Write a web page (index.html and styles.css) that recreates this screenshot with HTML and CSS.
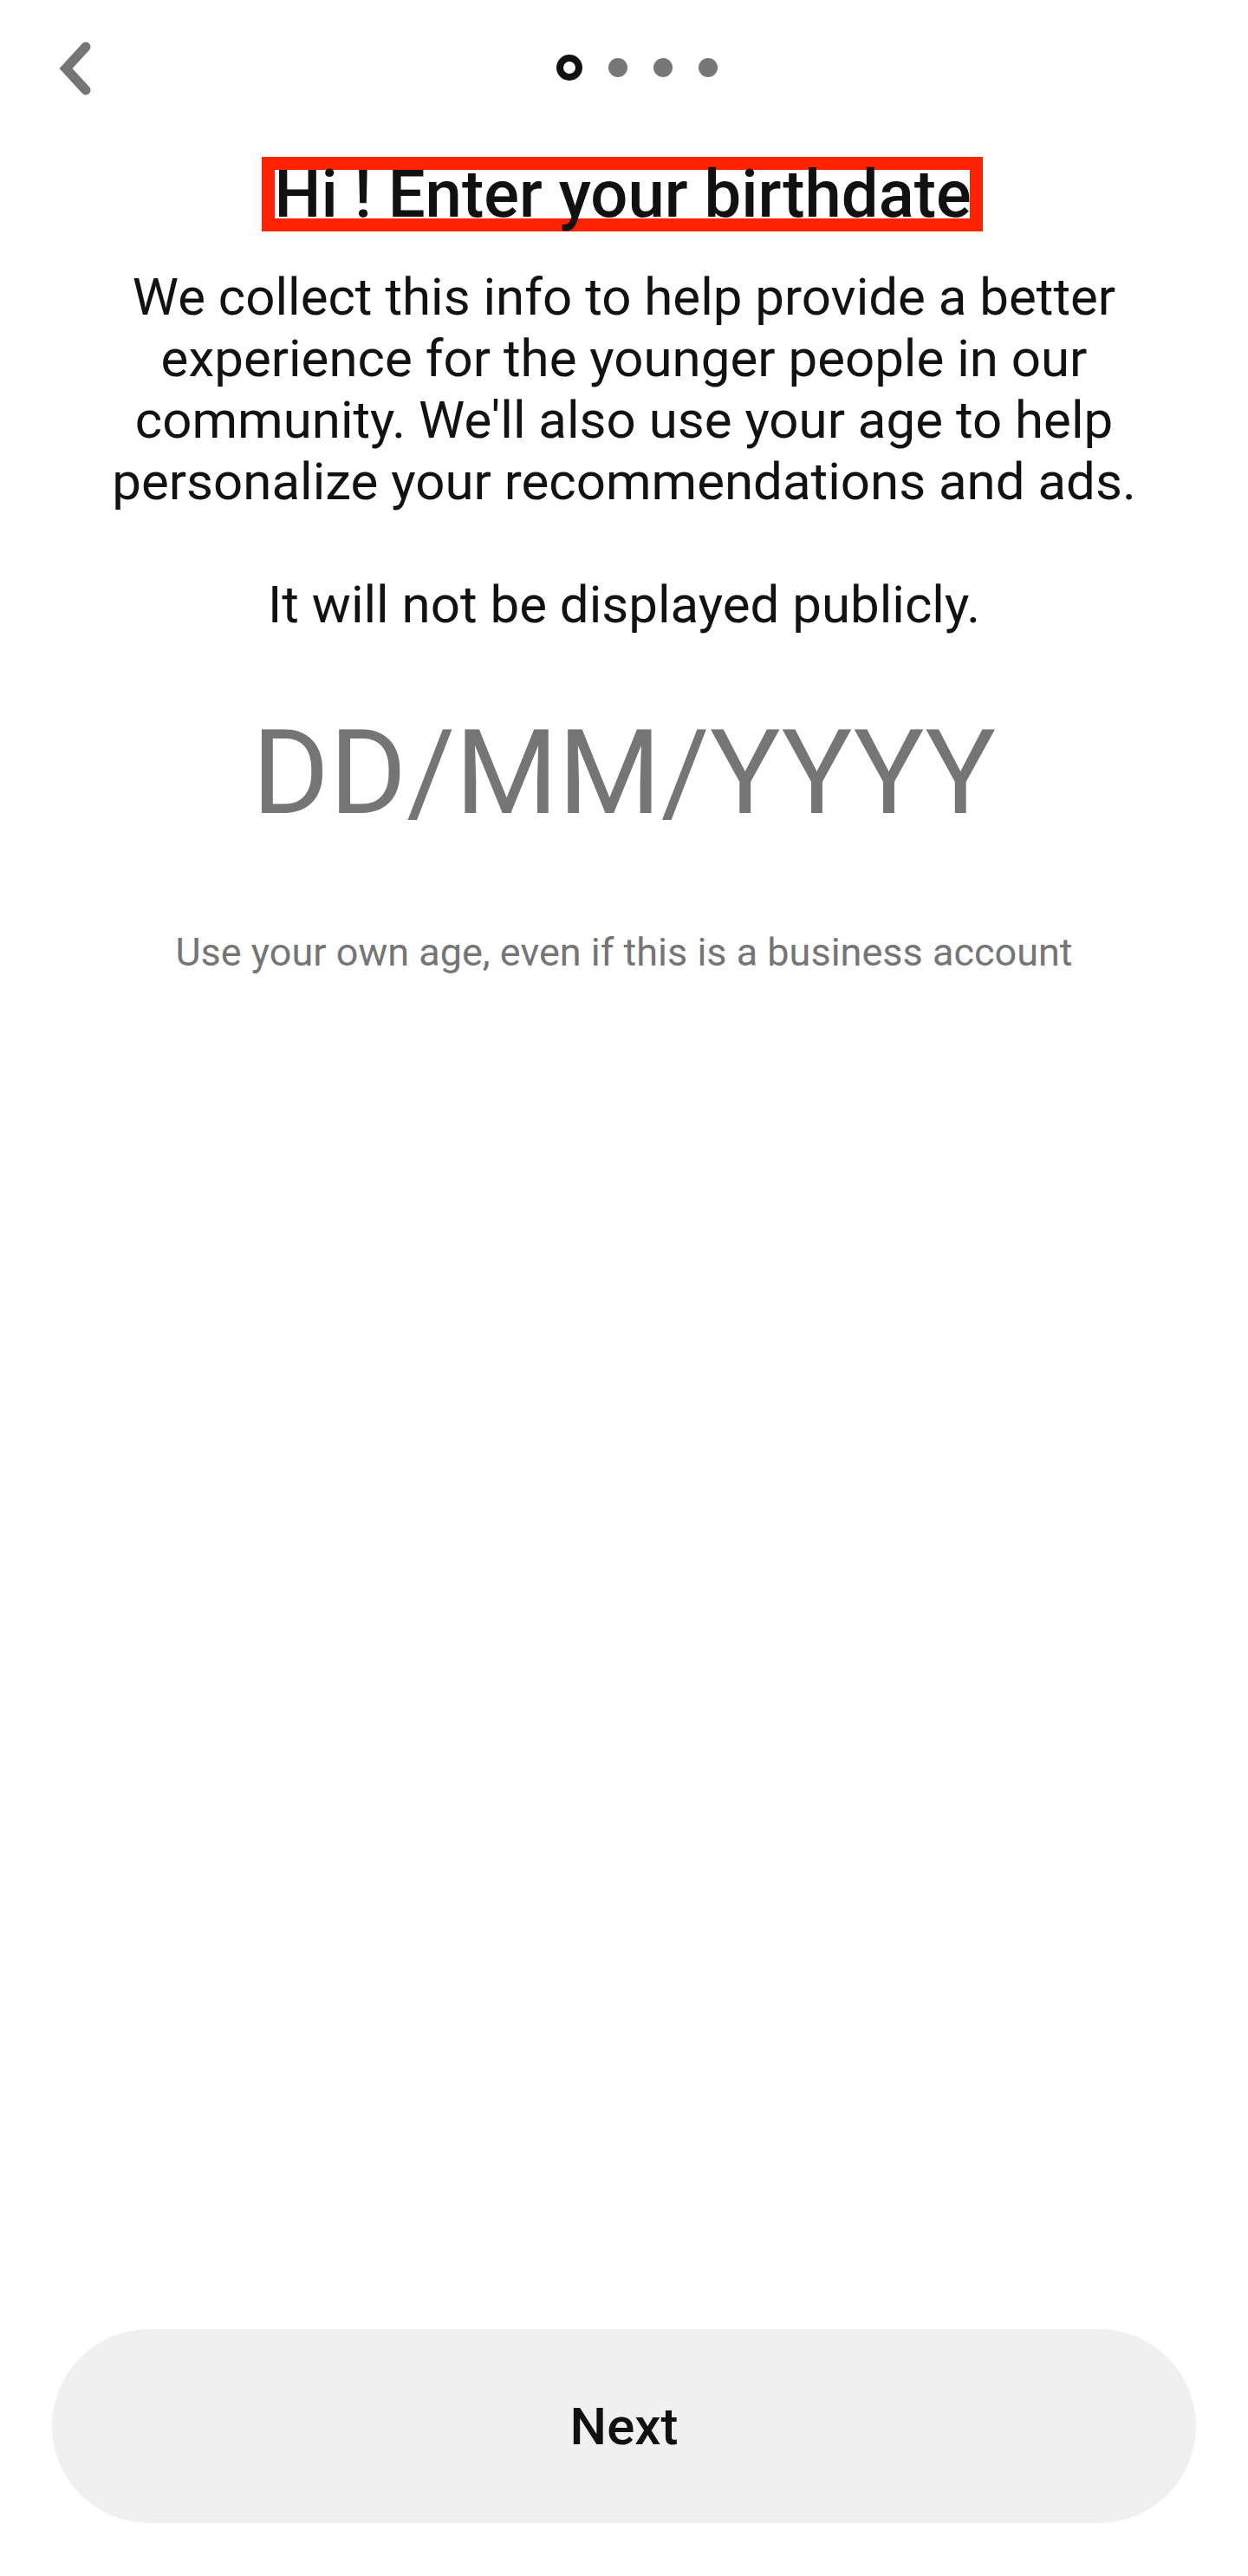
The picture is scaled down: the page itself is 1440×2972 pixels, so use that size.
FILE: index.html
```html
<!DOCTYPE html>
<html lang="en">
<head>
<meta charset="utf-8">
<title>Enter your birthdate</title>
<link rel="stylesheet" href="styles.css">
</head>
<body>
<div class="page">
  <header class="topbar">
    <button class="back" aria-label="Back">
      <svg width="60" height="80" viewBox="0 0 60 80" aria-hidden="true">
        <path d="M49 16 L26 41 L49 66" fill="none" stroke="#757575" stroke-width="11" stroke-linecap="round" stroke-linejoin="miter"/>
      </svg>
    </button>
    <div class="steps">
      <span class="step step-active"></span>
      <span class="step"></span>
      <span class="step"></span>
      <span class="step"></span>
    </div>
  </header>

  <div class="title-row">
    <h1 class="title">Hi ! Enter your birthdate</h1>
  </div>

  <div class="intro">
    <p>We collect this info to help provide a better experience for the younger people in our community. We'll also use your age to help personalize your recommendations and ads.</p>
    <p class="intro-gap">It will not be displayed publicly.</p>
  </div>

  <div class="date-field">DD/MM/YYYY</div>

  <p class="hint">Use your own age, even if this is a business account</p>

  <button class="next">Next</button>
</div>
</body>
</html>
```

FILE: styles.css
```css
* {
  box-sizing: border-box;
}

html, body {
  margin: 0;
  padding: 0;
  background: #ffffff;
}

body {
  font-family: Roboto, "Noto Sans", "Liberation Sans", sans-serif;
  color: #121212;
}

.page {
  min-height: 2972px;
  display: flex;
  flex-direction: column;
  align-items: stretch;
}

.topbar {
  height: 156px;
  display: flex;
  align-items: center;
  padding-left: 50px;
}

.back {
  border: 0;
  padding: 0;
  margin: 0;
  background: transparent;
  width: 60px;
  height: 80px;
  display: block;
}

.back svg {
  display: block;
}

.steps {
  display: flex;
  align-items: center;
  gap: 30px;
  margin-left: 532px;
}

.step {
  width: 22px;
  height: 22px;
  border-radius: 50%;
  background: #777777;
}

.step-active {
  width: 30px;
  height: 30px;
  background: #ffffff;
  border: 8px solid #111111;
}

.title-row {
  display: flex;
  justify-content: center;
  margin-top: 25px;
  padding-right: 5px;
}

.title {
  margin: 0;
  width: 832px;
  height: 86px;
  border: 15px solid #ff2200;
  font-size: 76px;
  font-weight: 500;
  line-height: 56px;
  text-align: center;
  white-space: nowrap;
  color: #111111;
}

.intro {
  margin: 40px 60px 0;
  text-align: center;
  font-size: 60px;
  line-height: 71px;
  color: #121212;
}

.intro p {
  margin: 0;
}

.intro .intro-gap {
  margin-top: 71px;
}

.date-field {
  margin-top: 79px;
  text-align: center;
  font-size: 136px;
  line-height: normal;
  color: #757575;
}

.hint {
  margin: 101px 0 0;
  text-align: center;
  font-size: 45px;
  line-height: normal;
  color: #757575;
}

.next {
  margin: auto 60px 61px;
  height: 224px;
  border: 0;
  border-radius: 112px;
  background: #f0f0f0;
  font-family: Roboto, "Noto Sans", "Liberation Sans", sans-serif;
  font-size: 60px;
  font-weight: 500;
  color: #111111;
  padding: 0;
}
```
